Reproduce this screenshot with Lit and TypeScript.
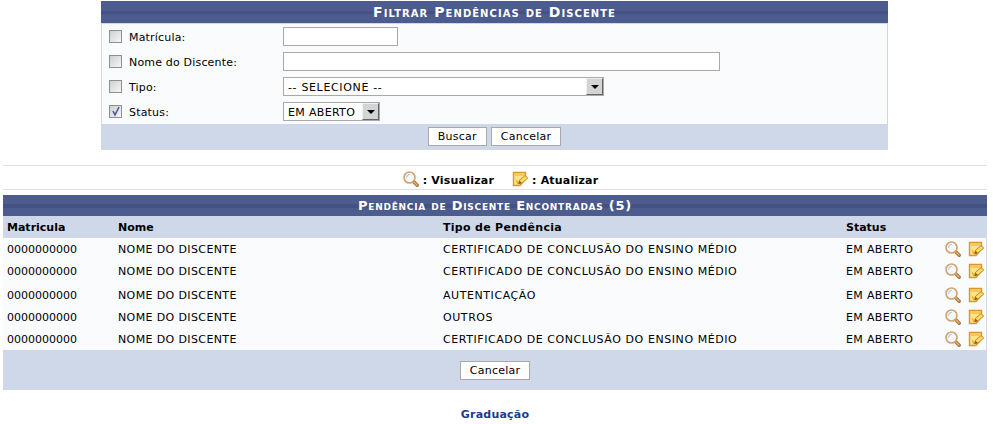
import { LitElement, html, css, svg } from 'lit'
import { customElement } from 'lit/decorators.js'

const rows = [
    { tipo: 'CERTIFICADO DE CONCLUSÃO DO ENSINO MÉDIO' },
    { tipo: 'CERTIFICADO DE CONCLUSÃO DO ENSINO MÉDIO' },
    { tipo: 'AUTENTICAÇÃO', tall: true },
    { tipo: 'OUTROS' },
    { tipo: 'CERTIFICADO DE CONCLUSÃO DO ENSINO MÉDIO' },
]

const lupa = html`<svg class="icon" width="16" height="16" viewBox="0 0 16 16">
    ${svg`<path d="M10 10 L14.2 14.2" stroke="#ab7434" stroke-width="3.4" stroke-linecap="round"/>
    <path d="M10.4 10.4 L14 14" stroke="#e6b67a" stroke-width="1.3" stroke-linecap="round"/>
    <circle cx="6.5" cy="6.5" r="5.5" fill="#f6f7f9" stroke="#cfa26e" stroke-width="1.6"/>
    <path d="M3.4 7 A3.4 3.4 0 0 1 7 3.4" fill="none" stroke="#c3ccd9" stroke-width="1.4"/>`}
</svg>`

const nota = html`<svg class="icon" width="16" height="16" viewBox="0 0 16 16">
    ${svg`<path d="M1.5 1.5 H13.5 V8 L8 14.5 H1.5 Z" fill="#fbe48a" stroke="#dd9532" stroke-width="1.4"/>
    <path d="M2.2 2.2 H12.8 V5 H2.2 Z" fill="#f5c75c"/>
    <path d="M6.6 12.8 L7.4 9.4 L13 4.6 L15.8 7 L10 12 Z" fill="#f8de62" stroke="#c4852c" stroke-width="1"/>
    <path d="M6.6 13 L7.4 9.6 L9.8 12 Z" fill="#8f5b1c"/>
    <path d="M3.4 8 L6.2 11 L5.4 14 Z" fill="#e9a83f"/>`}
</svg>`

@customElement('app-root')
export class AppRoot extends LitElement {
    static styles = css`
        :host {
            display: block;
            background: #fff;
            height: 424px;
            overflow: hidden;
            font-family: 'DejaVu Sans', Verdana, sans-serif;
            font-size: 11px;
            color: #000;
        }

        .page {
            padding: 1px 6px 0 3px;
        }

        .caption {
            background: linear-gradient(#4c5c8e 0 45%, #435283 45% 60%, #4c5c8e 60%);
            color: #fff;
            font-weight: bold;
            font-variant: small-caps;
            text-align: center;
        }

        .filter {
            width: 787px;
            margin: 0 0 0 98px;
        }

        .filter .caption {
            height: 22px;
            line-height: 23px;
            font-size: 14px;
            letter-spacing: 1.05px;
        }

        .filter-body {
            display: grid;
            grid-template-columns: 174px 1fr;
            grid-auto-rows: 25px;
            align-items: center;
            padding: 0 0 3px 7px;
            height: 97px;
            background: #f9fbfd;
            border: solid #cfd8e8;
            border-width: 1px 1px 0 1px;
        }

        .check-label {
            display: flex;
            align-items: center;
            gap: 7px;
            letter-spacing: 0.18px;
        }

        .check-label .text {
            padding-top: 2px;
        }

        .box {
            display: block;
            width: 13px;
            height: 13px;
            box-sizing: border-box;
            border: 1px solid #8f8f8f;
            background: linear-gradient(135deg, #cfcfcf, #f6f6f6);
            color: #4a5a9a;
        }

        .box svg {
            display: block;
        }

        input[type='text'] {
            display: block;
            box-sizing: border-box;
            height: 19px;
            padding: 1px 4px;
            border: 1px solid #a9a9a9;
            background: #fff;
            font: inherit;
        }

        .w-matricula {
            width: 115px;
        }

        .w-nome {
            width: 437px;
        }

        .select {
            display: flex;
            box-sizing: border-box;
            height: 19px;
            border: 1px solid #a9a9a9;
            background: #fff;
        }

        .select select {
            flex: 1;
            min-width: 0;
            appearance: none;
            border: 0;
            padding: 2px 4px 0;
            background: transparent;
            font: inherit;
            letter-spacing: 0.65px;
            color: #000;
        }

        .w-status select {
            letter-spacing: 0.33px;
        }

        .select .arrow {
            display: flex;
            align-items: center;
            justify-content: center;
            width: 17px;
            background: #d4d4d4;
            border: 1px solid;
            border-color: #f0f0f0 #666 #666 #f0f0f0;
            box-sizing: border-box;
        }

        .arrow::before {
            content: '';
            border: 4px solid transparent;
            border-top: 4px solid #000;
            border-bottom: 0;
        }

        .w-tipo {
            width: 321px;
        }

        .w-status {
            width: 97px;
        }

        .actions {
            display: flex;
            justify-content: center;
            align-items: center;
            gap: 4px;
            background: #cfd8e8;
        }

        .filter .actions {
            height: 26px;
            padding-bottom: 1px;
            box-sizing: border-box;
        }

        button {
            box-sizing: border-box;
            height: 19px;
            padding: 0 9px;
            border: 1px solid #a9a9a9;
            background: #fff;
            font: inherit;
            letter-spacing: 0.25px;
            color: #000;
        }

        .legend {
            display: flex;
            justify-content: center;
            align-items: center;
            gap: 18px;
            box-sizing: border-box;
            height: 25px;
            margin-top: 15px;
            margin-bottom: 5px;
            padding: 5px 0 0 11px;
            border-top: 1px solid #e0e0e0;
            border-bottom: 1px solid #e0e0e0;
            font-weight: bold;
            letter-spacing: 0.2px;
        }

        .legend span {
            display: flex;
            align-items: center;
            gap: 4px;
        }

        .legend .icon {
            margin-top: -2px;
        }

        .icon {
            display: block;
        }

        .results .caption {
            height: 21px;
            line-height: 22px;
            font-size: 13px;
            letter-spacing: 0.75px;
        }

        table {
            width: 100%;
            border-collapse: collapse;
            table-layout: fixed;
            background: #f9fbfd;
            border-right: 1px solid #cfd8e8;
        }

        th {
            height: 22px;
            padding: 0 0 0 4px;
            background: #cfd8e8;
            text-align: left;
            font-weight: bold;
        }

        th.tipo {
            letter-spacing: 0.3px;
        }

        td {
            height: 22px;
            padding: 0 0 0 4px;
        }

        tr.tall td {
            padding-top: 2px;
        }

        td.nome {
            letter-spacing: 0.38px;
        }

        td.tipo {
            letter-spacing: 0.57px;
        }

        .status-cell {
            display: grid;
            grid-template-columns: 92px 16px 16px;
            column-gap: 7px;
            align-items: center;
            letter-spacing: 0.33px;
        }

        .results .actions {
            height: 40px;
        }

        .footer {
            margin-top: 18px;
            text-align: center;
            font-weight: bold;
            letter-spacing: 0.2px;
            color: #1c3d8c;
        }
    `

    render() {
        return html`
            <div class="page">
                <section class="filter">
                    <div class="caption">Filtrar Pendências de Discente</div>
                    <div class="filter-body">
                        <label class="check-label"><span class="box"></span><span class="text">Matrícula:</span></label>
                        <input type="text" class="w-matricula" />
                        <label class="check-label"><span class="box"></span><span class="text">Nome do Discente:</span></label>
                        <input type="text" class="w-nome" />
                        <label class="check-label"><span class="box"></span><span class="text">Tipo:</span></label>
                        <div class="select w-tipo">
                            <select><option>-- SELECIONE --</option></select>
                            <span class="arrow"></span>
                        </div>
                        <label class="check-label">
                            <span class="box">
                                <svg width="11" height="11" viewBox="0 0 11 11">
                                    <path d="M3 5 L5 9 L9 1" fill="none" stroke="currentColor" stroke-width="1.6" />
                                </svg>
                            </span>
                            <span class="text">Status:</span>
                        </label>
                        <div class="select w-status">
                            <select><option>EM ABERTO</option></select>
                            <span class="arrow"></span>
                        </div>
                    </div>
                    <div class="actions">
                        <button>Buscar</button>
                        <button>Cancelar</button>
                    </div>
                </section>

                <div class="legend">
                    <span>${lupa}: Visualizar</span>
                    <span>${nota}: Atualizar</span>
                </div>

                <section class="results">
                    <div class="caption">Pendência de Discente Encontradas (5)</div>
                    <table>
                        <colgroup>
                            <col style="width: 111px" />
                            <col style="width: 325px" />
                            <col style="width: 403px" />
                            <col />
                        </colgroup>
                        <thead>
                            <tr>
                                <th>Matricula</th>
                                <th>Nome</th>
                                <th class="tipo">Tipo de Pendência</th>
                                <th>Status</th>
                            </tr>
                        </thead>
                        <tbody>
                            ${rows.map(
                                (r) => html`
                                    <tr class=${r.tall ? 'tall' : ''}>
                                        <td>0000000000</td>
                                        <td class="nome">NOME DO DISCENTE</td>
                                        <td class="tipo">${r.tipo}</td>
                                        <td>
                                            <div class="status-cell">
                                                <span>EM ABERTO</span>
                                                ${lupa} ${nota}
                                            </div>
                                        </td>
                                    </tr>
                                `
                            )}
                        </tbody>
                    </table>
                    <div class="actions"><button>Cancelar</button></div>
                </section>

                <div class="footer">Graduação</div>
            </div>
        `
    }
}
